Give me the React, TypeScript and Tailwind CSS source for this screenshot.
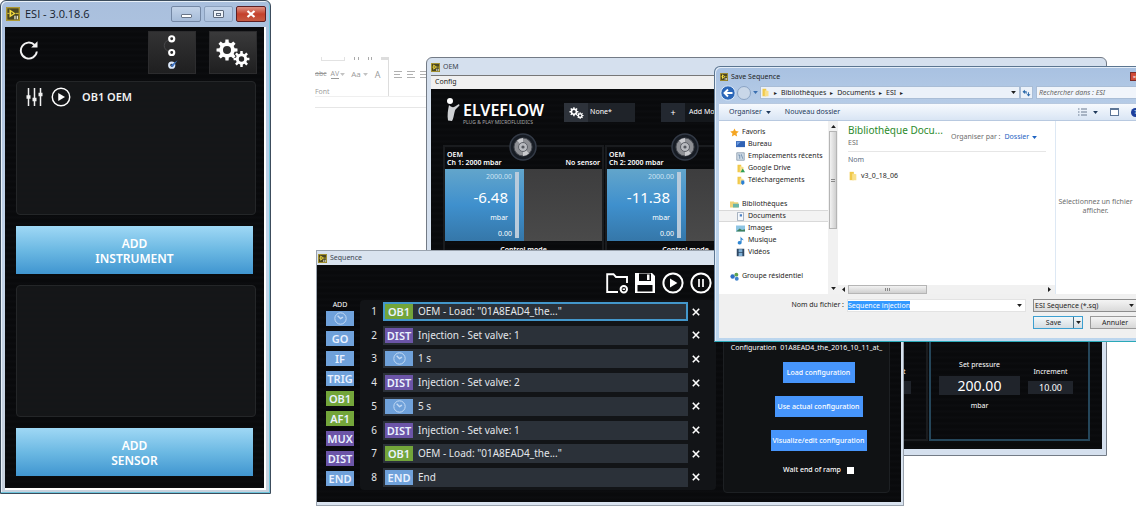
import type { ReactNode } from 'react'

const NOTO = "font-['Noto_Sans',sans-serif]"

const STRIPES =
  'bg-[repeating-linear-gradient(180deg,#090a0c_0px,#090a0c_3px,#0c0d10_4px,#0a0b0d_6px)]'

/* ---------- shared icons ---------- */

function gearPath(cx: number, cy: number, outer: number, inner: number, hole: number, teeth = 8) {
  const step = (Math.PI * 2) / teeth
  const points: string[] = []
  for (let i = 0; i < teeth; i++) {
    const a = i * step
    const corners: [number, number][] = [
      [inner, -0.3],
      [outer, -0.19],
      [outer, 0.19],
      [inner, 0.3],
    ]
    corners.forEach(([r, k]) => {
      points.push(`${(cx + r * Math.cos(a + k * step)).toFixed(2)} ${(cy + r * Math.sin(a + k * step)).toFixed(2)}`)
    })
  }
  return `M${points.join('L')}ZM${cx + hole} ${cy}a${hole} ${hole} 0 1 0 ${-2 * hole} 0a${hole} ${hole} 0 1 0 ${2 * hole} 0Z`
}

function Gears({ className }: { className: string }) {
  return (
    <svg viewBox="0 0 34 28" className={className} fill="#fff" fillRule="evenodd" aria-hidden="true">
      <path d={gearPath(11, 11, 10.6, 7.8, 4)} />
      <path d={gearPath(25.5, 20, 8, 5.7, 2.7)} />
    </svg>
  )
}

function AppIcon() {
  return (
    <svg viewBox="0 0 16 16" className="h-full w-full" aria-hidden="true">
      <rect width="16" height="16" fill="#4a4724" />
      <rect x=".8" y=".8" width="14.4" height="14.4" fill="none" stroke="#b39d33" strokeWidth="1.500" />
      <path d="M4 2.500l7 4.800L4 12z" fill="#f6dc3e" />
      <path d="M6 5.500l2.500 1.800L6 9z" fill="#4a4724" />
      <path d="M1.500 7.300H4M11 7.300h3.500" stroke="#f0d63c" />
      <path d="M9.500 10H11v4H9.500zM12.200 10h1.500v4h-1.500z" fill="#e8e8d8" />
    </svg>
  )
}

function Caret({ className = '' }: { className?: string }) {
  return (
    <svg viewBox="0 0 8 5" className={`h-[3px] w-[5px] shrink-0 ${className}`} fill="currentColor" aria-hidden="true">
      <path d="M0 0h8L4 5z" />
    </svg>
  )
}

function Clock() {
  return (
    <svg viewBox="0 0 16 16" className="h-[13px] w-[13px]" fill="none" stroke="#c3daf4" aria-hidden="true">
      <circle cx="8" cy="8" r="7" strokeWidth="1.2" />
      <path d="M4.5 4.5L8 8.2l3-2" strokeWidth="1.8" />
    </svg>
  )
}

function PlayCircle({ className, width = 2 }: { className: string; width?: number }) {
  return (
    <svg viewBox="0 0 22 22" className={className} fill="none" stroke="#fff" aria-hidden="true">
      <circle cx="11" cy="11" r="9.6" strokeWidth={width} />
      <path d="M8 6.6l7.4 4.4L8 15.4z" fill="#fff" stroke="none" />
    </svg>
  )
}

/* ---------- ESI window ---------- */

function EsiWindow() {
  return (
    <section className="absolute top-0 left-0 w-[271px] rounded-t-md border border-[#3c4c5c] bg-linear-to-b from-[#a9bfdd] via-[#c3d5ea] to-[#c8d2de] px-[4px] pb-[3px] font-['Open_Sans',sans-serif] shadow-[inset_-1px_-1px_0_#6fc5dc,inset_1px_1px_0_#e8f0f8]">
      <header className="flex h-[26px] items-center">
        <span className="ml-[1px] h-[14px] w-[14px]"><AppIcon /></span>
        <h1 className="ml-[5px] text-[11px] text-[#15202c]">ESI - 3.0.18.6</h1>
        <div className="ml-auto flex gap-[3px]">
          <button aria-label="Minimize" className="flex h-[16px] w-[30px] items-center justify-center rounded-[2px] border border-[#7488a5] bg-linear-to-b from-[#c3d3e8] to-[#a6bcd9]">
            <span className="mt-1 h-[4px] w-[11px] rounded-[1px] border border-[#6a7688] bg-white" />
          </button>
          <button aria-label="Maximize" className="flex h-[16px] w-[29px] items-center justify-center rounded-[2px] border border-[#8ba0bd] bg-linear-to-b from-[#c0d1e8] to-[#adc2de]">
            <span className="flex h-[8px] w-[11px] items-center justify-center rounded-[1px] border border-[#5f6b7d] bg-[#eef3f9]">
              <span className="h-[3px] w-[5px] border border-[#5f6b7d]" />
            </span>
          </button>
          <button aria-label="Close" className="flex h-[16px] w-[30px] items-center justify-center rounded-[2px] border border-[#5e1e22] bg-linear-to-b from-[#dd9184] via-[#c4402c] to-[#c65a42]">
            <svg viewBox="0 0 10 8" className="h-[8px] w-[10px]" stroke="#fff" strokeWidth="2.2" aria-hidden="true"><path d="M1.5 1l7 6M8.5 1l-7 6" /></svg>
          </button>
        </div>
      </header>

      <div className={`${STRIPES} border-r-2 border-b-2 border-white pt-[4px] pr-[7px] pb-[12px] pl-[11px]`}>
        <div className="flex items-start">
          <button aria-label="Refresh" className="mt-[9px] ml-[3px]">
            <svg viewBox="0 0 20 20" className="h-[20px] w-[20px]" fill="none" aria-hidden="true">
              <path d="M15.6 5A8 8 0 1 0 17.8 11.5" stroke="#f2f2f2" strokeWidth="1.9" />
              <path d="M12.2 7.6h6.3V1.2z" fill="#f2f2f2" />
            </svg>
          </button>
          <div className="ml-auto flex gap-[13px]">
            <button aria-label="Valves" className="flex h-[43px] w-[48px] justify-center border border-[#2c2c2e] bg-linear-to-b from-[#333334] to-[#1f1f20]">
              <svg viewBox="0 0 24 42" className="h-[41px]" fill="none" aria-hidden="true">
                <path d="M8.500 8C3 11 3 17 8.500 20" stroke="#4a4a4c" />
                <circle cx="12" cy="7" r="2.6" stroke="#fff" strokeWidth="2.2" />
                <circle cx="12" cy="21" r="2.6" stroke="#fff" strokeWidth="2.2" />
                <circle cx="12" cy="34" r="2.6" stroke="#dce8fa" strokeWidth="2.2" />
                <path d="M11 34l7-5-5 7z" fill="#3c72c4" />
              </svg>
            </button>
            <button aria-label="Settings" className="flex h-[43px] w-[48px] items-center justify-center border border-[#2c2c2e] bg-linear-to-b from-[#3a3a3b] to-[#1f1f20]">
              <Gears className="h-[28px] w-[34px]" />
            </button>
          </div>
        </div>

        <ul className="mt-[7px] h-[134px] w-[240px] rounded-sm border border-[#242628] bg-[#161719]/90 pt-[5px] pl-[9px]">
          <li className={`flex h-[20px] items-center ${NOTO}`}>
            <svg viewBox="0 0 17 18" className="h-[18px] w-[17px]" stroke="#f0f0f0" aria-hidden="true">
              <path d="M2.500 0v18M8.500 0v18M14.500 0v18" strokeWidth="1.500" />
              <path d="M.5 9h4M6.500 11.500h4M12.500 6.500h4" strokeWidth="3.500" />
            </svg>
            <PlayCircle className="ml-[8px] h-[20px] w-[20px]" width={1.6} />
            <span className="ml-[11px] text-[11px] font-semibold text-[#f0f0f0]">OB1 OEM</span>
          </li>
        </ul>

        <AddButton label="INSTRUMENT" />
        <div className="mt-[11px] h-[132px] w-[240px] rounded-sm border border-[#242628] bg-[#161719]/90" />
        <AddButton label="SENSOR" />
      </div>
    </section>
  )
}

function AddButton({ label }: { label: string }) {
  return (
    <button className={`mt-[11px] flex h-[48px] w-[237px] flex-col items-center justify-center bg-linear-to-b from-[#9fd8f5] via-[#6cb9e3] to-[#3f95d0] pt-[1px] text-[12px] leading-[15px] font-semibold text-white ${NOTO}`}>
      <span>ADD</span>
      <span>{label}</span>
    </button>
  )
}

/* ---------- toolbar of the document behind ---------- */

function RibbonFragment() {
  return (
    <div className="absolute top-[57px] left-[315px] w-[111px] overflow-hidden font-['Open_Sans',sans-serif] text-[#9a9a9a]">
      <div className="flex h-[40px] border-b border-[#efefef]">
        <div className="flex w-[77px] flex-col border-r border-[#ddd]">
          <div className="flex h-[5px] items-start gap-[9px] pl-[6px]">
            <span className="h-[4px] w-[24px] border-x border-b border-[#e2e2e2]" />
            <span className="h-[3px] w-[5px] border-x border-[#aaa]" />
            <span className="h-[3px] w-[4px] border-x border-[#aaa]" />
            <span className="h-[3px] w-[7px] bg-[#ddd]" />
          </div>
          <div className="flex h-[26px] items-center gap-[4px] text-[7px]">
            <s>abc</s>
            <span className="border-b border-[#999] leading-[9px]">AV</span>
            <Caret className="-ml-[3px] opacity-60" />
            <span className="ml-[2px] text-[8px]">Aa</span>
            <Caret className="-ml-[2px] opacity-60" />
            <span className="ml-[3px] text-[9px]">A</span>
          </div>
          <span className="text-[7px] leading-[9px]">Font</span>
        </div>
        <div className="flex gap-[5px] pt-[14px] pl-[5px]">
          {[0, 1, 2].map((i) => (
            <svg key={i} viewBox="0 0 8 8" className="h-[8px] w-[8px] shrink-0" stroke="#b0b0b0" aria-hidden="true">
              <path d="M0 .5h8M0 3.500h6M0 6.500h8" />
            </svg>
          ))}
        </div>
      </div>
      <div className="h-[11px] border-b border-[#e6e6e6]" />
    </div>
  )
}

/* ---------- OEM window ---------- */

interface Channel {
  id: string
  name?: string
  value?: string
  sensor?: string
  step?: string
  setPressure?: string
  active?: boolean
}

const channels: Channel[] = [
  { id: 'ch1', name: 'Ch 1: 2000 mbar', value: '-6.48', sensor: 'No sensor' },
  { id: 'ch2', name: 'Ch 2: 2000 mbar', value: '-11.38' },
  { id: 'ch3', step: '10.00' },
  { id: 'ch4', step: '10.00', setPressure: '200.00', active: true },
]

function Knob() {
  return (
    <svg viewBox="0 0 28 28" className="absolute -top-[14px] left-[64px] h-[28px] w-[28px]" aria-hidden="true">
      <circle cx="14" cy="14" r="13" fill="#171c24" stroke="#333a46" strokeWidth="1.500" />
      <circle cx="14" cy="14" r="9" fill="#8e9095" stroke="#4b4e55" />
      <path d="M14 14L8 7.500A9 9 0 0 1 14 5zM14 14l6 6.500a9 9 0 0 1-6 2.500z" fill="#c9cace" />
      <circle cx="14" cy="14" r="4.500" fill="#b9bbc0" stroke="#5d6067" />
      <circle cx="14" cy="14" r="1.600" fill="#55585f" />
    </svg>
  )
}

function ChannelPanel({ channel }: { channel: Channel }) {
  return (
    <article className={`relative flex h-[296px] flex-col border-2 ${channel.active ? 'border-[#25465a]' : 'border-[#1a1c1f]'}`}>
      <Knob />
      {channel.name && (
        <>
          <div className="flex h-[22px] items-end justify-between px-[2px] pb-[2px] text-[7px] leading-[8px] font-semibold text-white">
            <p>OEM<br />{channel.name}</p>
            {channel.sensor && <span>{channel.sensor}</span>}
          </div>
          <div className="flex h-[72px] text-white">
            <div className="flex w-[79px] gap-[3px] bg-linear-to-b from-[#62a5cb] via-[#3f90cd] to-[#3577a9] py-[3px] pr-[5px]">
              <div className="flex flex-1 flex-col justify-between text-right text-[7px] leading-[9px]">
                <span className="text-[#cfe3f2]">2000.00</span>
                <span className="pr-[4px] text-[15px] leading-[18px]">{channel.value}</span>
                <span className="pr-[4px]">mbar</span>
                <span>0.00</span>
              </div>
              <span className="w-[4px] bg-[#b8cbdc]" />
            </div>
            <div className="flex-1 bg-linear-to-b from-[#3d3d3e] to-[#4a4a4a]" />
          </div>
          <h3 className="mt-[3px] text-center text-[7px] leading-[11px] font-semibold text-white">Control mode</h3>
        </>
      )}
      {channel.step && (
        <div className="mt-auto mr-[15px] mb-[28px] ml-[8px] flex h-[51px] items-start justify-end gap-[8px] text-center text-[7px] leading-[10px] text-white">
          {channel.setPressure && (
            <div className="flex flex-1 flex-col">
              <label htmlFor={`${channel.id}-pressure`}>Set pressure</label>
              <input id={`${channel.id}-pressure`} className="my-[6px] h-[19px] w-full bg-[#20242b] text-center text-[14px] text-white" defaultValue={channel.setPressure} />
              <span>mbar</span>
            </div>
          )}
          <div className="mt-[7px] flex w-[45px] flex-col gap-[4px]">
            <label htmlFor={`${channel.id}-step`}>Increment</label>
            <input id={`${channel.id}-step`} className="h-[13px] w-full bg-[#20242b] text-center text-[9px] text-white" defaultValue={channel.step} />
          </div>
        </div>
      )}
    </article>
  )
}

function OemWindow() {
  return (
    <section className={`absolute top-[57px] left-[426px] w-[681px] rounded-t-md border border-[#737b86] bg-[#d5e0ee] px-[4px] pb-[6px] ${NOTO}`}>
      <header className="flex h-[17px] items-center gap-[3px] pt-[2px]">
        <span className="h-[9px] w-[9px]"><AppIcon /></span>
        <h2 className="text-[7px] text-[#3c4650]">OEM</h2>
      </header>
      <nav className="flex h-[14px] items-center border-t border-[#777] bg-[#f0f0f0] px-[4px]">
        <button className="text-[7px] text-[#222]">Config</button>
      </nav>
      <div className={`${STRIPES} px-[12px] pb-[8px]`}>
        <div className="flex h-[56px] items-start pt-[9px] text-white">
          <svg viewBox="0 0 14 24" className="ml-[3px] h-[24px] w-[14px]" aria-hidden="true">
            <circle cx="4" cy="3" r="3" fill="#fff" />
            <path d="M3 7c2 2 4 3 6 1.500L13 6l.5 1.500-4 4C8 14 8 20 6 23l-4-.5C1 17 2 12 3 7z" fill="#cfd1d4" />
          </svg>
          <div className="ml-[3px] pt-[4px]">
            <p className="text-[16px] leading-[16px] font-semibold">ELVEFLOW</p>
            <p className="mt-[2px] text-[5px] leading-[5px] text-[#aaa]">PLUG &amp; PLAY MICROFLUIDICS</p>
          </div>
          <button className="mt-[5px] ml-[20px] flex h-[19px] w-[71px] items-center bg-[#1f2329] text-[7px]">
            <span className="flex h-full w-[24px] items-center justify-center bg-[#2d323a]">
              <Gears className="h-[12px] w-[15px]" />
            </span>
            <span className="ml-[2px]">None*</span>
          </button>
          <button className="mt-[5px] ml-[26px] flex h-[19px] w-[100px] items-center bg-[#14171b] text-[7px]">
            <span className="flex h-full w-[24px] items-center justify-center bg-[#232830] text-[9px]">+</span>
            <span className="ml-[4px]">Add Module</span>
          </button>
        </div>
        <div className="grid grid-cols-4 gap-[1px]">
          {channels.map((channel) => (
            <ChannelPanel key={channel.id} channel={channel} />
          ))}
        </div>
      </div>
    </section>
  )
}

/* ---------- Sequence window ---------- */

type Kind = 'TIME' | 'GO' | 'IF' | 'TRIG' | 'OB1' | 'AF1' | 'MUX' | 'DIST' | 'END'

const kinds: Kind[] = ['TIME', 'GO', 'IF', 'TRIG', 'OB1', 'AF1', 'MUX', 'DIST', 'END']

const kindColors: Record<Kind, string> = {
  TIME: 'bg-[#6fa1da]',
  GO: 'bg-[#6fa1da]',
  IF: 'bg-[#6fa1da]',
  TRIG: 'bg-[#6fa1da]',
  OB1: 'bg-[#73a53a]',
  AF1: 'bg-[#73a53a]',
  MUX: 'bg-[#6c55a8]',
  DIST: 'bg-[#6c55a8]',
  END: 'bg-[#6fa1da]',
}

const steps: { kind: Kind; text: string }[] = [
  { kind: 'OB1', text: 'OEM - Load: "01A8EAD4_the..."' },
  { kind: 'DIST', text: 'Injection - Set valve: 1' },
  { kind: 'TIME', text: '1 s' },
  { kind: 'DIST', text: 'Injection - Set valve: 2' },
  { kind: 'TIME', text: '5 s' },
  { kind: 'DIST', text: 'Injection - Set valve: 1' },
  { kind: 'OB1', text: 'OEM - Load: "01A8EAD4_the..."' },
  { kind: 'END', text: 'End' },
]

function Tile({ kind }: { kind: Kind }) {
  return (
    <span className={`flex h-[15px] w-[28px] items-center justify-center text-[11px] leading-[15px] font-semibold text-[#eaf2ff] ${kindColors[kind]}`}>
      {kind === 'TIME' ? <Clock /> : kind}
    </span>
  )
}

function IconButton({ label, children }: { label: string; children: ReactNode }) {
  return <button aria-label={label}>{children}</button>
}

function SequenceWindow() {
  return (
    <section className={`absolute top-[250px] left-[316px] w-[588px] border border-[#9aa3ae] bg-[#d9e3ef] pr-[2px] pb-[3px] ${NOTO}`}>
      <header className="flex h-[14px] items-center gap-[3px] pl-[1px]">
        <span className="h-[9px] w-[9px]"><AppIcon /></span>
        <h2 className="text-[7px] text-[#3c4650]">Sequence</h2>
      </header>
      <div className={`${STRIPES} flex h-[237px]`}>
        <aside className="ml-[9px] w-[28px] pt-[34px]">
          <h3 className="text-center text-[7px] leading-[11px] text-white">ADD</h3>
          <div className="mt-[1px] flex flex-col gap-[5px]">
            {kinds.map((kind) => (
              <button key={kind} aria-label={kind}><Tile kind={kind} /></button>
            ))}
          </div>
        </aside>

        <div className="ml-[6px] w-[356px]">
          <div className="flex h-[35px] items-center justify-end gap-[6px] pr-[4px]">
            <IconButton label="New sequence">
              <svg viewBox="0 0 22 22" className="h-[22px] w-[22px]" fill="none" stroke="#fff" aria-hidden="true">
                <path d="M12 20H1.200V2.200h6.300L10 5h11v6" strokeWidth="1.900" />
                <circle cx="17.800" cy="17.200" r="3.200" strokeWidth="2" />
                <path d="M16.600 17.200h2.400" strokeWidth="1.500" />
              </svg>
            </IconButton>
            <IconButton label="Save sequence">
              <svg viewBox="0 0 22 22" className="h-[22px] w-[22px]" aria-hidden="true">
                <path d="M1 1h17l3 3v17H1z" fill="#fff" />
                <path d="M5 1.500h12v7.500H5zM3.500 13h15v6.500h-15z" fill="#08090b" />
                <path d="M13 2.500h2.500V8H13z" fill="#fff" />
              </svg>
            </IconButton>
            <IconButton label="Play"><PlayCircle className="h-[22px] w-[22px]" /></IconButton>
            <IconButton label="Pause">
              <svg viewBox="0 0 22 22" className="h-[22px] w-[22px]" fill="none" stroke="#fff" strokeWidth="2" aria-hidden="true">
                <circle cx="11" cy="11" r="9.600" />
                <path d="M9 7v8M13 7v8" strokeWidth="1.700" />
              </svg>
            </IconButton>
          </div>
          <ol className="flex h-[190px] flex-col justify-between rounded-sm bg-[#121417] pt-[2px] pb-[3px]">
            {steps.map((step, i) => (
              <li key={i} className="flex items-center text-[10px] leading-[15px] text-[#e3e6ea]">
                <span className="w-[23px] pr-[6px] text-right">{i + 1}</span>
                <div className={`flex h-[19px] w-[305px] items-center gap-[5px] border-2 bg-[#2b3139] ${i === 0 ? 'border-[#4397cb]' : 'border-[#2b3139]'}`}>
                  <Tile kind={step.kind} />
                  <span>{step.text}</span>
                </div>
                <button aria-label={`Remove step ${i + 1}`} className="ml-[4px]">
                  <svg viewBox="0 0 8 8" className="h-[8px] w-[8px]" stroke="#fff" strokeWidth="1.600" aria-hidden="true">
                    <path d="M.8.8l6.400 6.400M7.200.8L.8 7.200" />
                  </svg>
                </button>
              </li>
            ))}
          </ol>
        </div>

        <div className="mt-[35px] mr-[11px] ml-[7px] flex h-[193px] flex-1 flex-col items-center rounded-sm border border-[#1d2023] bg-[#101214] pt-[42px] pl-[24px] text-[7px] leading-[10px] text-white">
          <p className="-ml-[24px] flex gap-[4px] whitespace-nowrap">
            <span>Configuration</span>
            <span>01A8EAD4_the_2016_10_11_at_</span>
          </p>
          <div className="mt-[9px] flex flex-col items-center gap-[13px] font-medium">
            <button className="h-[21px] w-[72px] bg-[#4795fb]">Load configuration</button>
            <button className="h-[21px] w-[88px] bg-[#4795fb]">Use actual configuration</button>
            <button className="h-[21px] w-[96px] bg-[#4795fb]">Visualize/edit configuration</button>
          </div>
          <label className="mt-[14px] flex items-center gap-[6px] font-medium">
            Wait end of ramp
            <input type="checkbox" className="h-[7px] w-[7px] appearance-none bg-white" />
          </label>
        </div>
      </div>
    </section>
  )
}

/* ---------- Save dialog ---------- */

type SideIcon = 'star' | 'desktop' | 'recent' | 'drive' | 'download' | 'library' | 'document' | 'image' | 'music' | 'video' | 'group'

const sideGroups: { title: string; icon: SideIcon; items: { label: string; icon: SideIcon; selected?: boolean }[] }[] = [
  {
    title: 'Favoris',
    icon: 'star',
    items: [
      { label: 'Bureau', icon: 'desktop' },
      { label: 'Emplacements récents', icon: 'recent' },
      { label: 'Google Drive', icon: 'drive' },
      { label: 'Téléchargements', icon: 'download' },
    ],
  },
  {
    title: 'Bibliothèques',
    icon: 'library',
    items: [
      { label: 'Documents', icon: 'document', selected: true },
      { label: 'Images', icon: 'image' },
      { label: 'Musique', icon: 'music' },
      { label: 'Vidéos', icon: 'video' },
    ],
  },
  { title: 'Groupe résidentiel', icon: 'group', items: [] },
]

const folder = (
  <>
    <path d="M2 1h5v10H2z" fill="#f0c94a" />
    <path d="M5 3l5 1v7H5z" fill="#f9e08a" />
  </>
)

const sideIcons: Record<SideIcon, ReactNode> = {
  star: <path d="M6 .5l1.700 3.600 4 .5-3 2.700.8 4L6 9.400l-3.500 1.900.8-4-3-2.700 4-.5z" fill="#f5a623" />,
  desktop: <><path d="M0 1.500h12v8H0z" fill="#2f62b5" /><path d="M1 2.500h5l-5 5z" fill="#6c9be0" /></>,
  recent: <><path d="M1 1h10v10H1z" fill="#cfdbe6" stroke="#8697a8" /><path d="M3 4h2v5M7 3l2 6" stroke="#5a7ba0" fill="none" /></>,
  drive: <>{folder}<path d="M6 11l3-5 3 5z" fill="#2e9e58" /></>,
  download: <>{folder}<path d="M7 6h4v3h1l-3 3-3-3h1z" fill="#2a7fd6" /></>,
  library: <><path d="M0 2h5l1 1h5v7H0z" fill="#efd37a" /><path d="M4 5h8v5H4z" fill="#6bb5a8" /></>,
  document: <><path d="M2 .5h8v11H2z" fill="#f6f9fc" stroke="#8d9caf" /><path d="M5 3h3v3H5z" fill="#4b7fc4" /></>,
  image: <><path d="M0 2h12v8H0z" fill="#8ec5e4" /><path d="M0 10l5-4 3 2 4-1v3z" fill="#3f8160" /></>,
  music: <path d="M6 0c0 3 4 3 4 6-1-1-2-1.500-2.500-1.500V9a2.600 2.300 0 1 1-1.500-2z" fill="#2f86d2" />,
  video: <><path d="M1 1h10v10H1z" fill="#2d4763" /><path d="M3.500 1.500h5v4h-5zM3.500 6.500h5v4h-5z" fill="#7eaed4" /></>,
  group: <><circle cx="3.500" cy="6" r="3" fill="#2f6fc4" /><circle cx="8.500" cy="3.500" r="2.600" fill="#5fa34d" /><circle cx="9" cy="9" r="2.600" fill="#3f83cc" /></>,
}

function SmallIcon({ icon }: { icon: SideIcon }) {
  return <svg viewBox="0 0 12 12" className="h-[9px] w-[9px] shrink-0" aria-hidden="true">{sideIcons[icon]}</svg>
}

function Sidebar() {
  return (
    <nav className="w-[109px] bg-white pt-[5px]">
      {sideGroups.map((group) => (
        <div key={group.title} className="mb-[12px]">
          <a href="#" className="flex h-[12px] items-center gap-[3px] pl-[11px]">
            <SmallIcon icon={group.icon} />
            {group.title}
          </a>
          {group.items.map((item) => (
            <a key={item.label} href="#" className={`flex h-[12px] items-center gap-[3px] pl-[17px] ${item.selected ? 'border-y border-[#d9d9d9] bg-[#f3f3f3]' : ''}`}>
              <SmallIcon icon={item.icon} />
              {item.label}
            </a>
          ))}
        </div>
      ))}
    </nav>
  )
}

function SaveDialog() {
  return (
    <section className={`absolute top-[66px] left-[714px] w-[432px] rounded-tl-md border border-[#5b7590] border-b-[#2aa9b8] bg-linear-to-b from-[#a8c1e1] via-[#bdd1ea] via-20% to-[#bcd6ee] px-[4px] pb-[3px] text-[7px] leading-[10px] text-[#1e1e1e] shadow-[inset_1px_1px_0_#e3edf8] ${NOTO}`}>
      <header className="flex h-[17px] items-center gap-[3px] pt-[2px]">
        <span className="ml-[1px] h-[8px] w-[8px]"><AppIcon /></span>
        <h2>Save Sequence</h2>
        <button aria-label="Close" className="mr-[2px] ml-auto h-[9px] w-[9px] border border-[#7d2d2a] bg-[#cf4a36] text-[6px] leading-[6px] text-white">×</button>
      </header>

      <div className="flex h-[19px] items-center pb-[2px]">
        <button aria-label="Back" className="ml-[1px]">
          <svg viewBox="0 0 16 16" className="h-[16px] w-[16px]" aria-hidden="true">
            <circle cx="8" cy="8" r="7.200" fill="#2a66b8" stroke="#dbe9f8" />
            <path d="M12.500 8H5M8 4.500L4.500 8 8 11.500" fill="none" stroke="#fff" strokeWidth="1.900" />
          </svg>
        </button>
        <button aria-label="Forward" className="ml-[1px] h-[14px] w-[14px] rounded-full border border-[#8ba4c4] bg-[#c9d7e8]" />
        <Caret className="mx-[2px] text-[#3a6fb0]" />
        <div className="flex h-[13px] w-[260px] items-center gap-[4px] border border-[#a9bdd6] bg-[#ebf1f9] pr-[3px]">
          <svg viewBox="0 0 12 12" className="h-[9px] w-[9px]" aria-hidden="true">{folder}</svg>
          <span className="text-[6px]">▸</span>
          <span>Bibliothèques</span>
          <span className="text-[6px]">▸</span>
          <span>Documents</span>
          <span className="text-[6px]">▸</span>
          <span>ESI</span>
          <span className="text-[6px]">▸</span>
          <Caret className="ml-auto" />
        </div>
        <button aria-label="Refresh" className="flex h-[13px] w-[13px] items-center justify-center border border-[#a9bdd6] bg-[#ebf1f9]">
          <svg viewBox="0 0 10 10" className="h-[8px] w-[9px]" aria-hidden="true" fill="#2766a8">
            <path d="M0 3.500L3 .8v1.900h2.200V6H4V4.300H3v1.900zM10 6.500L7.500 9.500 5.200 6.500h1.600V4H8v2.500z" />
          </svg>
        </button>
        <input aria-label="Rechercher" className="ml-[3px] h-[13px] min-w-0 flex-1 border border-[#a9bdd6] bg-[#f1f5fb] px-[2px] italic placeholder:text-[#666]" placeholder="Rechercher dans : ESI" />
      </div>

      <div className="flex h-[18px] items-center border-y border-[#b8c9e0] bg-linear-to-b from-[#f7fafe] to-[#d9e5f4] pl-[10px] text-[#1e395b]">
        <button className="flex items-center gap-[4px]">Organiser <Caret /></button>
        <button className="ml-[14px]">Nouveau dossier</button>
        <div className="mr-[1px] ml-auto flex items-center gap-[12px]">
          <button aria-label="View" className="flex items-center gap-[6px]">
            <svg viewBox="0 0 9 8" className="h-[8px] w-[9px]" stroke="#6a7b90" aria-hidden="true"><path d="M0 1h1.500M3 1h6M0 4h1.500M3 4h6M0 7h1.500M3 7h6" /></svg>
            <Caret />
          </button>
          <button aria-label="Preview pane" className="h-[8px] w-[9px] border border-t-2 border-[#5c7596] bg-white" />
          <button aria-label="Help" className="h-[9px] w-[9px] rounded-full bg-[#1d3f9c] text-[6px] leading-[9px] text-white">?</button>
        </div>
      </div>

      <div className="flex h-[173px] bg-white">
        <Sidebar />
        <div className="flex w-[10px] flex-col items-center bg-[#f1f1f1] py-[4px]">
          <Caret className="rotate-180" />
          <span className="mt-[3px] flex h-[98px] w-[8px] flex-col items-center justify-center gap-[1px] border border-[#b5b5b5] bg-linear-to-r from-[#f2f2f2] to-[#cfcfcf]">
            <i className="h-px w-[4px] bg-[#888]" />
            <i className="h-px w-[4px] bg-[#888]" />
          </span>
          <Caret className="mt-auto" />
        </div>
        <div className="flex w-[218px] flex-col border-r border-[#dde8f4]">
          <div className="mr-[9px] ml-[10px] flex h-[31px] items-start border-b border-[#e6e6e6] pt-[2px] text-[#6d6d6d]">
            <div className="w-[98px]">
              <h3 className="text-[10px] leading-[15px] whitespace-nowrap text-[#2b8a2b]">Bibliothèque Docu...</h3>
              <p>ESI</p>
            </div>
            <span className="mt-[9px] ml-[5px] whitespace-nowrap">Organiser par :</span>
            <button className="mt-[9px] ml-[4px] flex items-center gap-[3px] text-[#1e63c2]">Dossier <Caret /></button>
          </div>
          <p className="mt-[3px] ml-[10px] text-[#5c6b80]">Nom</p>
          <a href="#" className="mt-[6px] ml-[10px] flex items-center gap-[3px]">
            <svg viewBox="0 0 12 12" className="h-[10px] w-[10px]" aria-hidden="true">{folder}</svg>
            v3_0_18_06
          </a>
          <div className="mt-auto flex h-[9px] items-center bg-[#f1f1f1] px-[3px]">
            <Caret className="rotate-90" />
            <span className="ml-[2px] flex h-full w-[79px] items-center justify-center gap-[1px] border border-[#b5b5b5] bg-linear-to-b from-[#f2f2f2] to-[#cfcfcf]">
              <i className="h-[3px] w-px bg-[#888]" />
              <i className="h-[3px] w-px bg-[#888]" />
              <i className="h-[3px] w-px bg-[#888]" />
            </span>
            <Caret className="ml-auto -rotate-90" />
          </div>
        </div>
        <p className="flex-1 pt-[76px] pr-[6px] text-center leading-[9px] whitespace-nowrap text-[#6d6d6d]">
          Sélectionnez un fichier<br />afficher.
        </p>
      </div>

      <form className="flex h-[44px] items-start bg-[#f0f0f0] pt-[5px]" onSubmit={(e) => e.preventDefault()}>
        <label htmlFor="file-name" className="w-[125px] pt-[1px] text-right">Nom du fichier :</label>
        <div className="ml-[3px] flex h-[13px] w-[179px] items-center justify-between border border-[#e3e3e3] bg-white pr-[3px]">
          <input id="file-name" className="h-[9px] w-[62px] bg-[#3399ff] text-white" defaultValue="Sequence injection" />
          <Caret />
        </div>
        <div className="ml-[7px] flex flex-1 flex-col gap-[4px]">
          <div className="flex h-[13px] items-center border border-[#8c8c8c] bg-linear-to-b from-[#f4f4f4] to-[#dadada] pr-[6px]">
            <select aria-label="Type de fichier" className="h-full flex-1 appearance-none pl-[1px]">
              <option>ESI Sequence (*.sq)</option>
            </select>
            <Caret />
          </div>
          <div className="flex gap-[7px]">
            <div className="flex h-[13px] w-[50px] border border-[#3c9fd0] bg-linear-to-b from-[#f4f8fa] to-[#d5dde2]">
              <button className="flex-1 text-center leading-[11px]">Save</button>
              <button aria-label="Save options" className="flex w-[9px] items-center justify-center border-l border-[#4a6a7c]"><Caret /></button>
            </div>
            <button className="h-[13px] w-[50px] border border-[#9a9a9a] bg-linear-to-b from-[#f4f4f4] to-[#d8d8d8] leading-[11px]">Annuler</button>
          </div>
        </div>
      </form>
    </section>
  )
}

export default function App() {
  return (
    <main className="relative h-screen w-full overflow-hidden bg-white">
      <RibbonFragment />
      <EsiWindow />
      <OemWindow />
      <SequenceWindow />
      <SaveDialog />
    </main>
  )
}
